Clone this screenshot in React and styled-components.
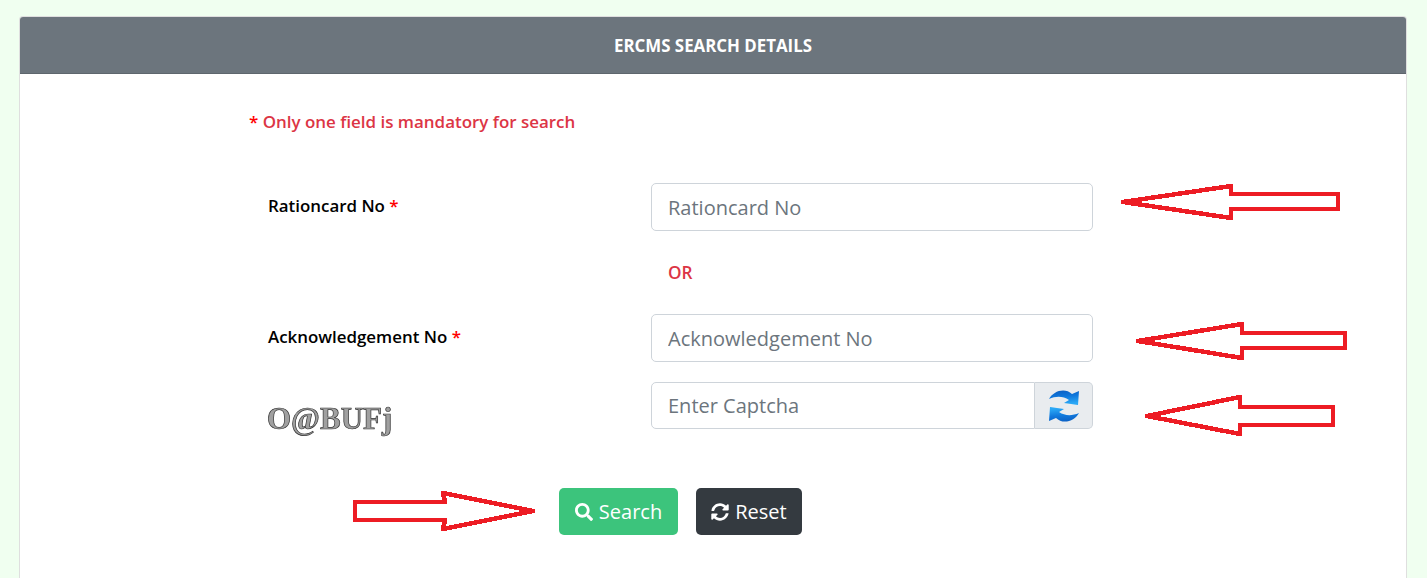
import React from "react";
import styled, { createGlobalStyle } from "styled-components";
import { FaSearch, FaSyncAlt } from "react-icons/fa";

const GlobalStyle = createGlobalStyle`
  html, body {
    margin: 0;
    padding: 0;
    background: #f0fff0;
    font-family: "Open Sans", sans-serif;
  }
  * { box-sizing: border-box; }
`;

const Page = styled.div`
  position: relative;
  height: 578px;
  overflow: hidden;
  padding: 16px 20px 0 19px;
`;
const Card = styled.div`
  background: #fff;
  border: 1px solid rgba(0, 0, 0, 0.125);
  border-radius: 4px;
  height: 600px;
`;
const CardHeader = styled.div`
  background: #6c757d;
  color: #fff;
  height: 57px;
  line-height: 58px;
  text-align: center;
  font-size: 16.85px;
  font-weight: 700;
  border-radius: 3px 3px 0 0;
  border-bottom: 1px solid rgba(0, 0, 0, 0.125);
`;
const CardBody = styled.div`
  padding: 36px 0 0 229px;
`;
const Note = styled.div`
  color: #dc3545;
  font-size: 16.95px;
  font-weight: 570;
  line-height: 24px;
  height: 73px;
`;
const Star = styled.span`
  color: #f00;
  font-weight: 600;
`;
const Row = styled.div`
  display: grid;
  grid-template-columns: 402px 442px;
  margin-bottom: ${(p) => p.$gap || 0}px;
`;
const Label = styled.label`
  padding: 10.5px 0 0 19px;
  font-size: 16.9px;
  font-weight: 570;
  line-height: 24px;
  color: #000;
`;
const Input = styled.input`
  width: 100%;
  height: 48px;
  padding: 0 16px;
  font: 400 20px "Open Sans", sans-serif;
  color: #495057;
  background: #fff;
  border: 1px solid #ced4da;
  border-radius: 5px;
  outline: 0;
  &::placeholder {
    color: #6c757d;
    opacity: 1;
  }
`;
const Or = styled.div`
  grid-column: 2;
  padding-left: 17px;
  color: #dc3545;
  font-size: 17.2px;
  font-weight: 570;
  line-height: 24px;
`;
const Captcha = styled.div`
  padding: 18px 0 0 18px;
  font: 700 31px/38px "Liberation Serif", serif;
  color: #a0a0a0;
  -webkit-text-stroke: 0.7px #333;
  filter: blur(0.6px);
`;
const InputGroup = styled.div`
  display: flex;
  height: 47px;
`;
const GroupInput = styled(Input)`
  flex: 1;
  height: 47px;
  border-radius: 5px 0 0 5px;
`;
const Addon = styled.div`
  width: 58px;
  display: flex;
  align-items: center;
  justify-content: center;
  background: #e9ecef;
  border: 1px solid #ced4da;
  border-left: 0;
  border-radius: 0 5px 5px 0;
`;
const Actions = styled.div`
  display: flex;
  gap: 18px;
  padding-left: 310px;
  margin-top: 50px;
`;
const Button = styled.button`
  display: flex;
  align-items: center;
  justify-content: center;
  gap: 6px;
  width: ${(p) => p.$width}px;
  height: 47px;
  padding: 0;
  border: 0;
  border-radius: 5px;
  color: #fff;
  font: 400 20px "Open Sans", sans-serif;
  background: ${(p) => p.$bg};
`;
const Annotations = styled.svg`
  position: absolute;
  top: 0;
  left: 0;
  pointer-events: none;
`;

const arrows = [
  "1123,202 1231,186 1231,194 1338,194 1338,209 1231,209 1231,218",
  "1138,341 1242,324 1242,333 1345,333 1345,348 1242,348 1242,358",
  "1147,416 1240,397 1240,407 1333,407 1333,425 1240,425 1240,434",
  "533,511 443,493 445,502 355,502 355,520 445,520 443,529",
];

const ARROW_PATH = "M1 9C5 1 17-3 24 4L31 1 30 15 16 13 21 10C15 6 8 6 1 9z";

const RefreshIcon = () => (
  <svg width="32" height="32" viewBox="0 0 32 32">
    <defs>
      <linearGradient id="refreshUp" x1="0" y1="0" x2="0.2" y2="1">
        <stop offset="0" stopColor="#0a5cc0" />
        <stop offset="0.5" stopColor="#1078dc" />
        <stop offset="1" stopColor="#2aa8f6" />
      </linearGradient>
    </defs>
    <path d={ARROW_PATH} fill="url(#refreshUp)" />
    <path d={ARROW_PATH} fill="url(#refreshUp)" transform="rotate(180 16 16)" />
  </svg>
);

const App = () => (
  <>
    <GlobalStyle />
    <Page>
      <Card>
        <CardHeader>ERCMS SEARCH DETAILS</CardHeader>
        <CardBody>
          <Note>
            <Star>*</Star> Only one field is mandatory for search
          </Note>
          <Row $gap={30}>
            <Label>
              Rationcard No <Star>*</Star>
            </Label>
            <Input placeholder="Rationcard No" />
          </Row>
          <Row $gap={29}>
            <Or>OR</Or>
          </Row>
          <Row $gap={20}>
            <Label>
              Acknowledgement No <Star>*</Star>
            </Label>
            <Input placeholder="Acknowledgement No" />
          </Row>
          <Row>
            <Captcha>O@BUFj</Captcha>
            <InputGroup>
              <GroupInput placeholder="Enter Captcha" />
              <Addon>
                <RefreshIcon />
              </Addon>
            </InputGroup>
          </Row>
          <Actions>
            <Button $bg="#3cc47c" $width={119}>
              <FaSearch size={18} /> Search
            </Button>
            <Button $bg="#343a40" $width={106}>
              <FaSyncAlt size={18} /> Reset
            </Button>
          </Actions>
        </CardBody>
      </Card>
      <Annotations width="1427" height="578" shapeRendering="crispEdges">
        {arrows.map((points) => (
          <polygon
            key={points}
            points={points}
            fill="none"
            stroke="#ed1c24"
            strokeWidth="4.5"
            strokeLinejoin="round"
          />
        ))}
      </Annotations>
    </Page>
  </>
);

export default App;
